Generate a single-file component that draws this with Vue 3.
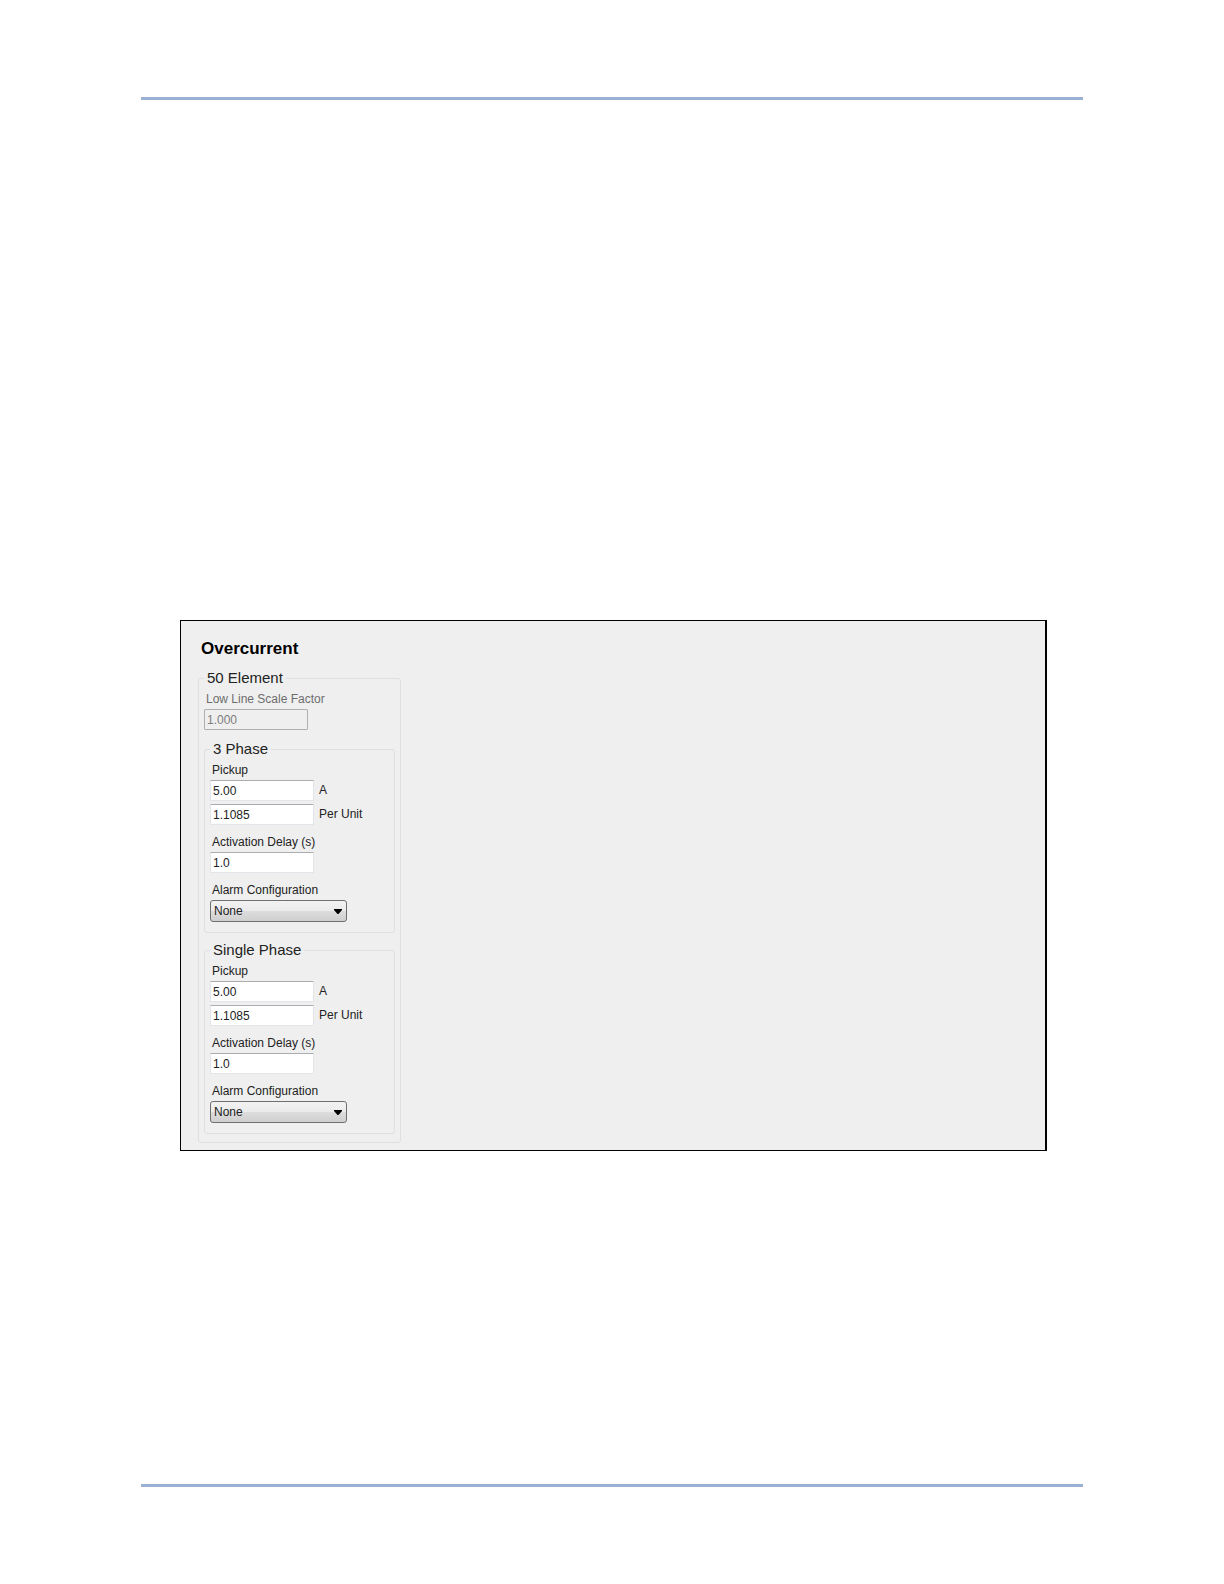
<script setup>
import { ref } from "vue";

const scaleFactor = ref("1.000");
const alarmOptions = ["None", "Status Only", "Latching", "Non-Latching"];

// One entry per group inside the 50 element
const phases = ref([
  { id: "three", title: "3 Phase", pickup: "5.00", perUnit: "1.1085", delay: "1.0", alarm: "None" },
  { id: "single", title: "Single Phase", pickup: "5.00", perUnit: "1.1085", delay: "1.0", alarm: "None" },
]);
</script>

<template>
  <div class="page">
    <hr class="rule" />
    <main class="content">
      <section class="panel">
        <h1>Overcurrent</h1>
        <fieldset class="group element">
          <legend>50 Element</legend>
          <label class="caption disabled" for="scale-factor">Low Line Scale Factor</label>
          <input id="scale-factor" v-model="scaleFactor" type="text" class="field" disabled />

          <fieldset v-for="phase in phases" :key="phase.id" class="group phase">
            <legend>{{ phase.title }}</legend>
            <label class="caption" :for="phase.id + '-pickup'">Pickup</label>
            <div class="row">
              <input :id="phase.id + '-pickup'" v-model="phase.pickup" type="text" class="field" />
              <span class="unit">A</span>
            </div>
            <div class="row">
              <input :id="phase.id + '-per-unit'" v-model="phase.perUnit" type="text" class="field" />
              <label class="unit" :for="phase.id + '-per-unit'">Per Unit</label>
            </div>

            <label class="caption spaced" :for="phase.id + '-delay'">Activation Delay (s)</label>
            <input :id="phase.id + '-delay'" v-model="phase.delay" type="text" class="field" />

            <label class="caption spaced" :for="phase.id + '-alarm'">Alarm Configuration</label>
            <div class="dropdown">
              <select :id="phase.id + '-alarm'" v-model="phase.alarm">
                <option v-for="option in alarmOptions" :key="option">{{ option }}</option>
              </select>
              <svg class="arrow" viewBox="0 0 8 5" width="8" height="5" aria-hidden="true">
                <path d="M0 0h8v1L4.5 5h-1L0 1z" />
              </svg>
            </div>
          </fieldset>
        </fieldset>
      </section>
    </main>
    <hr class="rule" />
  </div>
</template>

<style>
body {
  margin: 0;
  background: #fff;
}
</style>

<style scoped>
.page {
  box-sizing: border-box;
  display: flex;
  flex-direction: column;
  min-height: 100vh;
  padding: 97px 141px;
  font-family: "Liberation Sans", Arial, sans-serif;
  font-size: 12px;
  color: #222;
}

.rule {
  flex: none;
  width: 100%;
  height: 3px;
  margin: 0;
  border: none;
  background: #9bb1d4;
}

.content {
  flex: 1;
  padding: 520px 36px 40px 39px;
}

.panel {
  padding: 18px 17px 7px;
  border: 1px solid #000;
  border-right-width: 2px;
  background: #efefef;
}

h1 {
  margin: 0 0 10px;
  padding-left: 3px;
  font-size: 17px;
  line-height: 20px;
  color: #000;
}

.group {
  box-sizing: border-box;
  min-width: 0;
  margin: 0;
  border: 1px solid #dce0e2;
  border-radius: 3px;
}

.element {
  width: 203px;
  padding: 4px 5px 8px;
}

.phase {
  margin-top: 10px;
  padding: 4px 5px 10px;
}

.phase + .phase {
  margin-top: 8px;
}

legend {
  padding: 0 3px;
  font-size: 15px;
  line-height: 18px;
}

.caption {
  display: block;
  margin-bottom: 2px;
  padding-left: 2px;
  line-height: 16px;
}

.spaced {
  margin-top: 9px;
}

.disabled {
  color: #6d6d6d;
}

.field {
  box-sizing: border-box;
  display: block;
  width: 104px;
  height: 21px;
  margin: 0;
  padding: 0 2px;
  border: 1px solid #e2e5e9;
  border-top-color: #abadb3;
  border-radius: 1px;
  background: #fff;
  font: inherit;
  color: #222;
}

.field:disabled {
  border-color: #afafaf;
  background: #efefef;
  color: #7d7d7d;
}

.row {
  display: flex;
  gap: 5px;
}

.row + .row {
  margin-top: 3px;
}

.unit {
  line-height: 20px;
}

.dropdown {
  position: relative;
  width: 137px;
}

select {
  box-sizing: border-box;
  display: block;
  width: 100%;
  height: 22px;
  margin: 0;
  padding: 0 20px 0 3px;
  appearance: none;
  border: 1px solid #707070;
  border-radius: 3px;
  background: linear-gradient(#f2f2f2, #ebebeb 50%, #dddddd 50%, #cfcfcf);
  font: inherit;
  color: #222;
}

.arrow {
  position: absolute;
  top: 9px;
  right: 5px;
  fill: #000;
  pointer-events: none;
}
</style>
